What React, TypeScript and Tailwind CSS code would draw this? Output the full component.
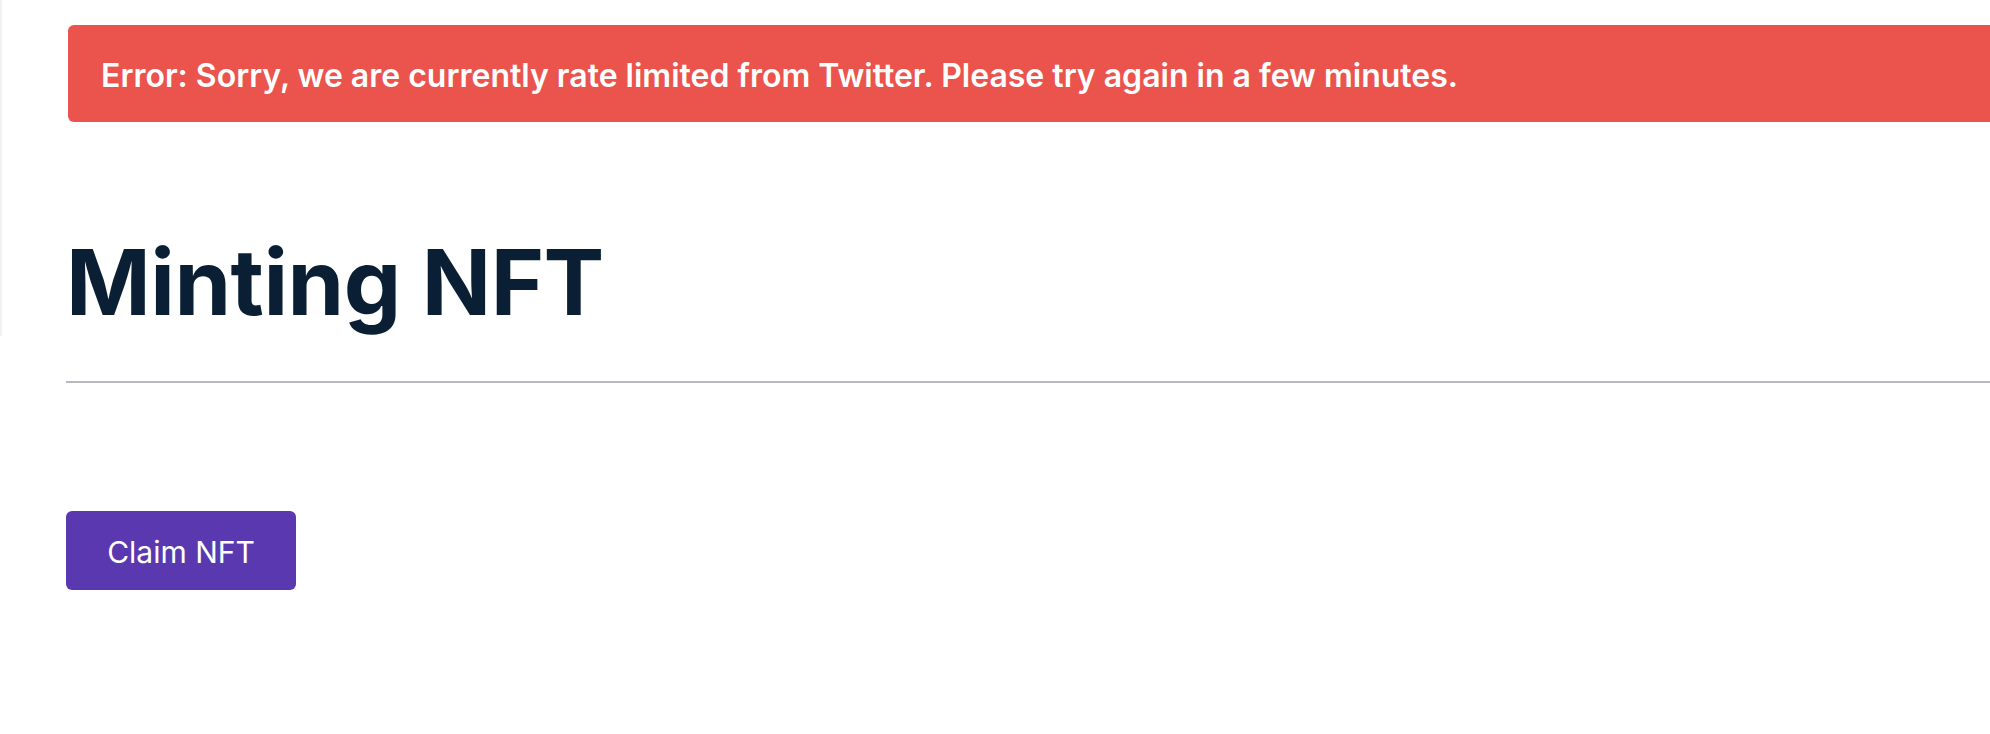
export default function App() {
  return (
    <div className="relative min-h-[734px] w-full overflow-hidden bg-white font-['Inter',sans-serif]">
      {/* faint edge of the side panel */}
      <div className="absolute left-0 top-0 h-[336px] w-[3px] bg-gradient-to-r from-[#ececec] to-white" />

      <div className="flex flex-col pl-[66px] pt-[25px]">
        <div className="ml-[2px] flex h-[97px] w-[2000px] items-center rounded-l-[6px] bg-[#eb534d] pl-[33px] pt-[4px]">
          <span className="text-[32px] font-semibold text-white">
            Error: Sorry, we are currently rate limited from Twitter. Please try again in a few minutes.
          </span>
        </div>

        <h1 className="mt-[115px] text-[91px] font-bold leading-none tracking-[-0.5px] text-[#0a1f33]">
          Minting NFT
        </h1>

        <hr className="mt-[53px] w-[2000px] border-0 border-t-[2px] border-[#b6b9bd]" />

        <div className="mt-[128px]">
          <button className="flex h-[79px] w-[230px] items-center justify-center rounded-[6px] bg-[#5a39b0] pt-[4px] text-[30px] text-white">
            Claim NFT
          </button>
        </div>
      </div>
    </div>
  );
}
